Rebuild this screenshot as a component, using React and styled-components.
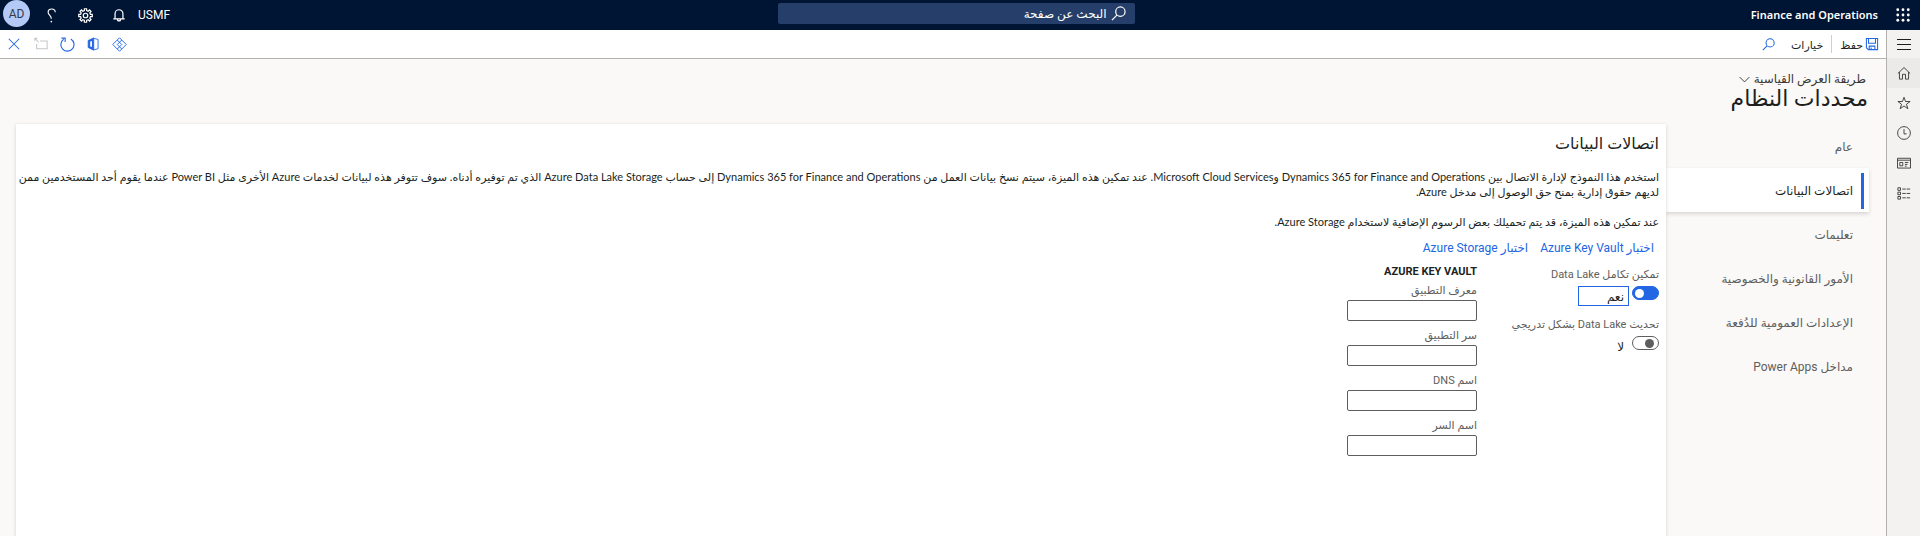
import React from "react";
import styled, { createGlobalStyle, css } from "styled-components";

const GlobalStyle = createGlobalStyle`
  * { box-sizing: border-box; }
  body {
    margin: 0;
    background: #faf9f8;
    color: #201f1e;
    font: 12px/16px Roboto, "DejaVu Sans", sans-serif;
  }
  button, input { font: inherit; color: inherit; }
`;

const Page = styled.div`
  min-height: 100vh;
  display: flex;
  flex-direction: column;
`;

const TopBar = styled.header`
  display: flex;
  align-items: center;
  height: 30px;
  padding-right: 8px;
  background: #001433;
  color: #fff;
`;

const TopGroup = styled.div`
  flex: 1;
  display: flex;
  align-items: center;
  justify-content: ${(p) => (p.$end ? "flex-end" : "flex-start")};
`;

const IconButton = styled.button`
  display: flex;
  align-items: center;
  justify-content: center;
  width: ${(p) => p.$width || 34}px;
  height: 28px;
  padding: 0;
  border: 0;
  background: none;
  color: ${(p) => p.$color || "inherit"};
`;

const ProductName = styled.span`
  margin-right: 16px;
  font-family: "Noto Sans", sans-serif;
  font-size: 11px;
  font-weight: 600;
`;

const Company = styled.button`
  padding: 0;
  margin-left: 2px;
  border: 0;
  background: none;
`;

const Avatar = styled.button`
  width: 27px;
  height: 27px;
  margin: 0 4px 3px 3px;
  padding: 0;
  border: 0;
  border-radius: 50%;
  background: #b4c9f5;
  color: #323a4a;
`;

const SearchBox = styled.label`
  flex: 0 1 357px;
  display: flex;
  align-items: center;
  gap: 4px;
  height: 21px;
  margin-bottom: 3px;
  padding: 0 9px;
  border-radius: 2px;
  background: #263f6a;
`;

const SearchInput = styled.input`
  flex: 1;
  min-width: 0;
  padding: 0;
  border: 0;
  outline: 0;
  background: none;
  &::placeholder { color: #fff; opacity: 1; }
`;

const Body = styled.div`
  flex: 1;
  display: flex;
`;

const Rail = styled.nav`
  flex: none;
  width: 34px;
  border-left: 1px solid #b3b0ad;
  background: #f3f2f1;
`;

const RailLink = styled.a`
  display: flex;
  align-items: center;
  justify-content: center;
  height: 30px;
  color: #323130;
  background: ${(p) => (p.$active ? "#ebeae9" : "none")};
  &:first-child { height: 28px; }
`;

const Workspace = styled.div`
  flex: 1;
  min-width: 0;
  display: flex;
  flex-direction: column;
`;

const ActionBar = styled.div`
  display: flex;
  align-items: center;
  height: 29px;
  padding: 0 7px 0 0;
  border-bottom: 1px solid #b3b0ad;
  background: #fff;
`;

const ActionButton = styled.button`
  display: flex;
  align-items: center;
  gap: 2px;
  height: 28px;
  padding: 0 8px;
  border: 0;
  background: none;
  font-size: 11px;
  svg { color: #2266e3; }
`;

const SaveButton = styled(ActionButton)`
  padding-right: 0;
`;

const ActionText = styled.span`
  padding-top: 3px;
`;

const Divider = styled.span`
  width: 1px;
  height: 18px;
  background: #d2d0ce;
`;

const Spacer = styled.span`
  flex: 1;
`;

const ActionIcons = styled.div`
  display: flex;
  align-items: center;
`;

const PageHeader = styled.div`
  height: 65px;
  padding: 12px 18px 0 0;
`;

const ViewPicker = styled.button`
  display: flex;
  align-items: center;
  gap: 4px;
  padding: 0 2px;
  height: 16px;
  border: 0;
  background: none;
  color: #3b3a39;
`;

const PageTitle = styled.h1`
  margin: 0;
  font-size: 22px;
  line-height: 24px;
  font-weight: 400;
`;

const Columns = styled.div`
  flex: 1;
  display: flex;
  padding: 0 17px 0 16px;
`;

const SideNav = styled.nav`
  flex: 0 0 203px;
`;

const SideLink = styled.a`
  display: flex;
  align-items: center;
  justify-content: flex-start;
  height: 44px;
  padding: 2px 16px 0 0;
  color: #605e5c;
  text-decoration: none;
  ${(p) =>
    p.$active &&
    css`
      padding-right: 5px;
      background: #fff;
      color: #201f1e;
      box-shadow: 0 2px 4px rgba(0, 0, 0, 0.14);
      &::before {
        content: "";
        width: 3px;
        height: 36px;
        margin-left: 8px;
        background: #2266e3;
      }
    `}
`;

const Panel = styled.main`
  flex: 1;
  min-width: 0;
  padding: 8px 7px 0 0;
  background: #fff;
  box-shadow: 0 1px 4px rgba(0, 0, 0, 0.16);
`;

const PanelTitle = styled.h2`
  margin: 0 0 13px;
  font-size: 16px;
  line-height: 24px;
  font-weight: 400;
`;

const Note = styled.p`
  margin: 0;
  font-family: Lato, "DejaVu Sans", sans-serif;
  font-size: 11px;
  line-height: 15px;
  & + & { margin-top: 15px; }
`;

const Links = styled.div`
  display: flex;
  gap: 12px;
  padding: 0 5px 0 0;
  margin: 11px 0 7px;
`;

const TextLink = styled.a`
  color: #2266e3;
  text-decoration: none;
`;

const Form = styled.div`
  display: flex;
`;

const Toggles = styled.div`
  flex: 0 0 182px;
  display: flex;
  flex-direction: column;
  gap: 10px;
  padding-top: 3px;
`;

const FieldLabel = styled.label`
  display: block;
  font-size: 11px;
  line-height: 18px;
  color: #605e5c;
  white-space: nowrap;
`;

const ToggleLine = styled.div`
  display: flex;
  align-items: flex-start;
  gap: 3px;
  margin-top: 2px;
`;

const Switch = styled.input`
  appearance: none;
  display: flex;
  align-items: center;
  justify-content: flex-start;
  width: 27px;
  height: 14px;
  margin: 0;
  padding: 0 4px;
  border: 1px solid #605e5c;
  border-radius: 7px;
  background: #fff;
  &::before {
    content: "";
    width: 9px;
    height: 9px;
    border-radius: 50%;
    background: #605e5c;
  }
  &:checked {
    justify-content: flex-end;
    padding: 0 2px;
    border-color: #2266e3;
    background: #2266e3;
  }
  &:checked::before { background: #fff; }
`;

const ToggleValue = styled.span`
  width: 51px;
  height: 20px;
  padding: 0 4px;
  border: 1px solid ${(p) => (p.$focused ? "#2266e3" : "transparent")};
  line-height: 20px;
`;

const VaultGroup = styled.fieldset`
  width: 130px;
  margin: 0;
  padding: 0;
  border: 0;
`;

const VaultLegend = styled.legend`
  padding: 0;
  margin-bottom: 1px;
  font-size: 11px;
  font-weight: 700;
  line-height: 18px;
`;

const VaultField = styled.div`
  margin-bottom: 6px;
`;

const TextInput = styled.input`
  display: block;
  width: 100%;
  height: 21px;
  padding: 0 6px;
  border: 1px solid #605e5c;
  border-radius: 2px;
  background: #fff;
`;

function Icon({ size = 14, children, stroke = 1 }) {
  return (
    <svg width={size} height={size} viewBox="0 0 16 16" fill="none" stroke="currentColor" strokeWidth={stroke} aria-hidden="true">
      {children}
    </svg>
  );
}

const WaffleIcon = () => (
  <Icon>
    {[2, 8, 14].flatMap((y) =>
      [2, 8, 14].map((x) => <circle key={`${x}-${y}`} cx={x} cy={y} r="1.6" fill="currentColor" stroke="none" />)
    )}
  </Icon>
);
const SearchIcon = ({ size }) => (
  <Icon size={size} stroke={1.3}>
    <circle cx="10" cy="6" r="5" />
    <path d="M6.3 9.7 1 15" />
  </Icon>
);
const BellIcon = () => (
  <Icon stroke={1.4}>
    <path d="M3.5 12V6.5a4.5 4.5 0 0 1 9 0V12M1.5 12.5h13M6.2 13a1.8 1.8 0 0 0 3.6 0" />
  </Icon>
);
const gearPath = Array.from({ length: 8 }, (_, i) => {
  const at = (deg, r) => {
    const a = ((i * 45 + deg) * Math.PI) / 180;
    return `${(8 + r * Math.cos(a)).toFixed(2)} ${(8 + r * Math.sin(a)).toFixed(2)}`;
  };
  return `${i ? "L" : "M"}${at(-13, 5.4)}L${at(-9, 7.3)}L${at(9, 7.3)}L${at(13, 5.4)}`;
}).join("");
const GearIcon = () => (
  <Icon size={15} stroke={1.3}>
    <path d={`${gearPath}Z`} />
    <circle cx="8" cy="8" r="2.4" />
  </Icon>
);
const HelpIcon = () => (
  <Icon size={15} stroke={1.2}>
    <path d="M12 4.500C12 2.300 10.300 1 8.200 1S4.400 2.300 4.400 4.400c0 3 3.400 3.600 3.400 7" />
    <circle cx="7.800" cy="14.500" r="0.900" fill="currentColor" stroke="none" />
  </Icon>
);
const MenuIcon = () => (
  <Icon>
    <path d="M0 2.900h16M0 8.600h16M0 14.300h16" stroke="#201f1e" strokeWidth="1.200" />
  </Icon>
);
const HomeIcon = () => (
  <Icon>
    <path d="M1 8.500 8 1.800l7 6.700M2.800 7v8h3.500v-5.500h3.400V15h3.500V7" />
  </Icon>
);
const StarIcon = () => (
  <Icon>
    <path d="m8 1.500 1.700 4.800H15l-4.200 3.100 1.600 5.100L8 11.400l-4.400 3.100 1.600-5.100L1 6.300h5.300Z" />
  </Icon>
);
const ClockIcon = () => (
  <Icon>
    <circle cx="8" cy="8" r="7.300" />
    <path d="M8 3.500V9h3" />
  </Icon>
);
const WorkspaceIcon = () => (
  <Icon>
    <path d="M.6 2.600h14.800v11.200H.6zM.6 4.800h14.800M3.200 7.400h3.400v3.800H3.200zM9 7.400h4M9 9.600h3M9 11.600h2" />
  </Icon>
);
const ModulesIcon = () => (
  <Icon>
    <path d="M1 2h3v3H1zM1 7h3v3H1zM1 12h3v3H1zM6 3.500h4M11 3.500h4M6 8.500h4M11 8.500h4M6 13.500h4M11 13.500h4" />
  </Icon>
);
const SaveIcon = () => (
  <Icon stroke={1.2}>
    <path d="M1.600 1.600h12.800v12.800H3.800l-2.200-2.200zM4 1.600v5.500h8V1.600M4.800 14.400v-4h6.500v4M7 12v2.400" />
  </Icon>
);
const ChevronIcon = () => (
  <Icon size={11} stroke={1.4}>
    <path d="m1 4.500 7 7 7-7" />
  </Icon>
);
const CloseIcon = () => (
  <Icon stroke={1.2}>
    <path d="m2 2 12 12M14 2 2 14" />
  </Icon>
);
const PopoutIcon = () => (
  <Icon stroke={1.2}>
    <path d="M7 4.500h8v9H3V8M1 1.500l4.500 4.500M1 4.500v-3h3" />
  </Icon>
);
const RefreshIcon = () => (
  <Icon size={15} stroke={1.2}>
    <path d="M11.500 2.100a7 7 0 1 1-7.600.3M1.500 1.200h4v4" />
  </Icon>
);
const OfficeIcon = () => (
  <Icon>
    <path d="M2.500 4 8.800 1v14L2.500 12z" fill="currentColor" />
    <path d="M4.800 5.200 6.800 4.600v6.800l-2-.6z" fill="#fff" stroke="none" />
    <path d="m8.800 1.500 5 1.300v10.600l-5 1.300" />
  </Icon>
);
const DiamondIcon = () => (
  <Icon size={15}>
    <path d="M8 .8 15.200 8 8 15.200.8 8zM5.600 3.200 10.400 8l-4.800 4.800M10.400 3.200 5.600 8l4.800 4.800" />
  </Icon>
);

const railItems = [
  ["القائمة", MenuIcon],
  ["الصفحة الرئيسية", HomeIcon],
  ["المفضلة", StarIcon],
  ["الأخيرة", ClockIcon],
  ["مساحات العمل", WorkspaceIcon],
  ["الوحدات", ModulesIcon],
];

const sections = [
  "عام",
  "اتصالات البيانات",
  "تعليمات",
  "الأمور القانونية والخصوصية",
  "الإعدادات العمومية للدُفعة",
  "مداخل Power Apps",
];

const vaultFields = [
  ["app-id", "معرف التطبيق"],
  ["app-secret", "سر التطبيق"],
  ["dns-name", "اسم DNS"],
  ["secret-name", "اسم السر"],
];

function ToggleField({ id, label, value, checked }) {
  return (
    <div>
      <FieldLabel htmlFor={id}>{label}</FieldLabel>
      <ToggleLine>
        <Switch id={id} type="checkbox" role="switch" defaultChecked={checked} />
        <ToggleValue $focused={checked}>{value}</ToggleValue>
      </ToggleLine>
    </div>
  );
}

export default function App() {
  return (
    <Page dir="rtl" lang="ar">
      <GlobalStyle />
      <TopBar>
        <TopGroup>
          <IconButton $width={18} aria-label="التطبيقات"><WaffleIcon /></IconButton>
          <ProductName>Finance and Operations</ProductName>
        </TopGroup>
        <SearchBox>
          <SearchIcon size={15} />
          <SearchInput type="text" placeholder="البحث عن صفحة" />
        </SearchBox>
        <TopGroup $end>
          <Company>USMF</Company>
          <IconButton aria-label="الإشعارات"><BellIcon /></IconButton>
          <IconButton aria-label="الإعدادات"><GearIcon /></IconButton>
          <IconButton aria-label="المساعدة"><HelpIcon /></IconButton>
          <Avatar>AD</Avatar>
        </TopGroup>
      </TopBar>
      <Body>
        <Rail>
          {railItems.map(([label, Glyph], i) => (
            <RailLink key={label} href="#" aria-label={label} $active={i === 1}>
              <Glyph />
            </RailLink>
          ))}
        </Rail>
        <Workspace>
          <ActionBar>
            <SaveButton><SaveIcon /><ActionText>حفظ</ActionText></SaveButton>
            <Divider />
            <ActionButton><ActionText>خيارات</ActionText></ActionButton>
            <ActionButton aria-label="بحث"><SearchIcon size={13} /></ActionButton>
            <Spacer />
            <ActionIcons>
              <IconButton $width={26} $color="#2266e3" aria-label="Power Apps"><DiamondIcon /></IconButton>
              <IconButton $width={26} $color="#2266e3" aria-label="Office"><OfficeIcon /></IconButton>
              <IconButton $width={26} $color="#2266e3" aria-label="تحديث"><RefreshIcon /></IconButton>
              <IconButton $width={26} $color="#c8c6c4" aria-label="نافذة جديدة"><PopoutIcon /></IconButton>
              <IconButton $width={28} $color="#2266e3" aria-label="إغلاق"><CloseIcon /></IconButton>
            </ActionIcons>
          </ActionBar>
          <PageHeader>
            <ViewPicker>طريقة العرض القياسية<ChevronIcon /></ViewPicker>
            <PageTitle>محددات النظام</PageTitle>
          </PageHeader>
          <Columns>
            <SideNav>
              {sections.map((name, i) => (
                <SideLink key={name} href="#" $active={i === 1}>{name}</SideLink>
              ))}
            </SideNav>
            <Panel>
              <PanelTitle>اتصالات البيانات</PanelTitle>
              <Note>
                استخدم هذا النموذج لإدارة الاتصال بين Dynamics 365 for Finance and Operations وMicrosoft Cloud Services. عند تمكين هذه الميزة، سيتم نسخ بيانات العمل من Dynamics 365 for Finance and Operations إلى حساب Azure Data Lake Storage الذي تم توفيره أدناه. سوف تتوفر هذه لبيانات لخدمات Azure الأخرى مثل Power BI عندما يقوم أحد المستخدمين ممن لديهم حقوق إدارية بمنح حق الوصول إلى مدخل Azure.
              </Note>
              <Note>عند تمكين هذه الميزة، قد يتم تحميلك بعض الرسوم الإضافية لاستخدام Azure Storage.</Note>
              <Links>
                <TextLink href="#">اختبار Azure Key Vault</TextLink>
                <TextLink href="#">اختبار Azure Storage</TextLink>
              </Links>
              <Form>
                <Toggles>
                  <ToggleField id="lake" label="تمكين تكامل Data Lake" value="نعم" checked />
                  <ToggleField id="trickle" label="تحديث Data Lake بشكل تدريجي" value="لا" />
                </Toggles>
                <VaultGroup>
                  <VaultLegend>AZURE KEY VAULT</VaultLegend>
                  {vaultFields.map(([id, label]) => (
                    <VaultField key={id}>
                      <FieldLabel htmlFor={id}>{label}</FieldLabel>
                      <TextInput id={id} type="text" />
                    </VaultField>
                  ))}
                </VaultGroup>
              </Form>
            </Panel>
          </Columns>
        </Workspace>
      </Body>
    </Page>
  );
}
